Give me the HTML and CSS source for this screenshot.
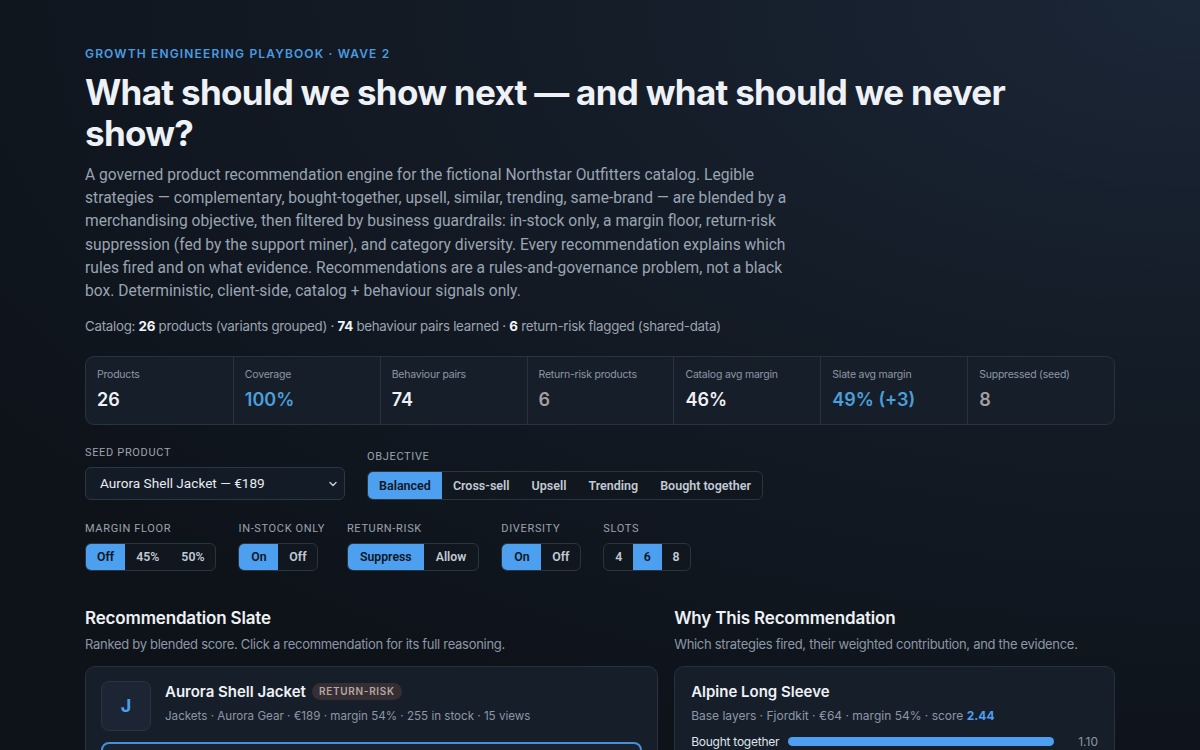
FILE: index.html
```html
<!DOCTYPE html>
<html lang="en">
<head>
<meta charset="utf-8">
<title>Recommendation Engine</title>
<link rel="stylesheet" href="styles.css">
</head>
<body>
<main class="page">
  <div class="eyebrow">GROWTH ENGINEERING PLAYBOOK · WAVE 2</div>
  <h1 class="title">What should we show next — and what should we never show?</h1>
  <p class="lede">A governed product recommendation engine for the fictional Northstar Outfitters catalog. Legible strategies — complementary, bought-together, upsell, similar, trending, same-brand — are blended by a merchandising objective, then filtered by business guardrails: in-stock only, a margin floor, return-risk suppression (fed by the support miner), and category diversity. Every recommendation explains which rules fired and on what evidence. Recommendations are a rules-and-governance problem, not a black box. Deterministic, client-side, catalog + behaviour signals only.</p>
  <p class="catalog">Catalog: <b>26</b> products (variants grouped) · <b>74</b> behaviour pairs learned · <b>6</b> return-risk flagged (shared-data)</p>

  <section class="stats">
    <div class="stat"><div class="stat-label">Products</div><div class="stat-value">26</div></div>
    <div class="stat"><div class="stat-label">Coverage</div><div class="stat-value blue">100%</div></div>
    <div class="stat"><div class="stat-label">Behaviour pairs</div><div class="stat-value">74</div></div>
    <div class="stat"><div class="stat-label">Return-risk products</div><div class="stat-value muted">6</div></div>
    <div class="stat"><div class="stat-label">Catalog avg margin</div><div class="stat-value">46%</div></div>
    <div class="stat"><div class="stat-label">Slate avg margin</div><div class="stat-value blue">49% (+3)</div></div>
    <div class="stat"><div class="stat-label">Suppressed (seed)</div><div class="stat-value muted">8</div></div>
  </section>

  <section class="controls">
    <div class="control">
      <div class="control-label">SEED PRODUCT</div>
      <div class="select">
        <span>Aurora Shell Jacket — €189</span>
        <svg class="chev" width="10" height="10" viewBox="0 0 10 10"><path d="M2 3.5 L5 6.5 L8 3.5" fill="none" stroke="#c9d0da" stroke-width="1.4" stroke-linecap="round" stroke-linejoin="round"/></svg>
      </div>
    </div>
    <div class="control">
      <div class="control-label">OBJECTIVE</div>
      <div class="seg seg-lg">
        <button class="active">Balanced</button><button>Cross-sell</button><button>Upsell</button><button>Trending</button><button>Bought together</button>
      </div>
    </div>
  </section>

  <section class="controls row2">
    <div class="control">
      <div class="control-label">MARGIN FLOOR</div>
      <div class="seg"><button class="active">Off</button><button>45%</button><button>50%</button></div>
    </div>
    <div class="control">
      <div class="control-label">IN-STOCK ONLY</div>
      <div class="seg"><button class="active w40">On</button><button class="w40">Off</button></div>
    </div>
    <div class="control">
      <div class="control-label">RETURN-RISK</div>
      <div class="seg seg-wide"><button class="active">Suppress</button><button>Allow</button></div>
    </div>
    <div class="control">
      <div class="control-label">DIVERSITY</div>
      <div class="seg"><button class="active w40">On</button><button class="w40">Off</button></div>
    </div>
    <div class="control">
      <div class="control-label">SLOTS</div>
      <div class="seg"><button class="slot">4</button><button class="slot active">6</button><button class="slot">8</button></div>
    </div>
  </section>

  <section class="columns">
    <div class="col">
      <h2 class="sec-title">Recommendation Slate</h2>
      <p class="sec-sub">Ranked by blended score. Click a recommendation for its full reasoning.</p>
      <div class="card slate">
        <div class="seed">
          <div class="avatar">J</div>
          <div class="seed-info">
            <div class="seed-name">Aurora Shell Jacket <span class="badge">RETURN-RISK</span></div>
            <div class="meta seed-meta">Jackets · Aurora Gear · €189 · margin 54% · 255 in stock · 15 views</div>
          </div>
        </div>
        <div class="rec selected"></div>
      </div>
    </div>
    <div class="col">
      <h2 class="sec-title">Why This Recommendation</h2>
      <p class="sec-sub">Which strategies fired, their weighted contribution, and the evidence.</p>
      <div class="card why">
        <div class="why-name">Alpine Long Sleeve</div>
        <div class="meta why-meta">Base layers · Fjordkit · €64 · margin 54% · score <b class="score">2.44</b></div>
        <div class="bar-row">
          <span class="bar-label">Bought together</span>
          <span class="bar-track"><span class="bar-fill" style="width:100%"></span></span>
          <span class="bar-val">1.10</span>
        </div>
      </div>
    </div>
  </section>
</main>
</body>
</html>
```

FILE: styles.css
```css
* { box-sizing: border-box; }
html, body { margin: 0; padding: 0; }
body {
  min-height: 100vh;
  background: radial-gradient(ellipse 120% 90% at 100% 0%, #1b2637 0%, #141c27 45%, #0e131a 100%);
  background-color: #0e131a;
  color: #e6eaf0;
  font-family: Inter, "Noto Sans", sans-serif;
  overflow: hidden;
}
.page {
  width: 1030px;
  margin: 0 auto;
  padding-top: 46px;
}
.eyebrow {
  font-size: 12px;
  font-weight: 600;
  letter-spacing: 1.15px;
  color: #4b9be0;
  line-height: 16px;
}
.title {
  margin: 10px 0 0;
  font-size: 35px;
  line-height: 41px;
  font-weight: 700;
  letter-spacing: -0.02em;
  color: #eef1f5;
  max-width: 1010px;
}
.lede {
  margin: 10px 0 0;
  max-width: 720px;
  font-family: Roboto, sans-serif;
  font-size: 15.6px;
  line-height: 23.2px;
  color: #9aa4b2;
}
.catalog {
  margin: 13.5px 0 0;
  font-size: 13.3px;
  letter-spacing: -0.02em;
  line-height: 18px;
  color: #9aa4b2;
}
.catalog b { color: #f2f4f7; font-weight: 700; }

.stats {
  margin-top: 21px;
  display: grid;
  grid-template-columns: repeat(7, 1fr);
  border: 1px solid #283241;
  border-radius: 9px;
  background: #161e29;
  overflow: hidden;
}
.stat {
  padding: 11px 11px 13px;
  border-left: 1px solid #283241;
}
.stat:first-child { border-left: none; }
.stat-label { font-size: 10.5px; letter-spacing: -0.02em; color: #8d97a5; line-height: 14px; }
.stat-value { margin-top: 7px; font-size: 18px; font-weight: 600; color: #eef1f5; line-height: 22px; }
.stat-value.blue { color: #4a9fdc; }
.stat-value.muted { color: #a59ea2; }

.controls {
  display: flex;
  align-items: flex-end;
  gap: 22px;
  margin-top: 21px;
}
.controls.row2 { margin-top: 22px; }
.control-label {
  font-family: Roboto, sans-serif;
  font-size: 11px;
  letter-spacing: 0.06em;
  color: #9aa3af;
  line-height: 14px;
  margin-bottom: 7px;
}
.select {
  width: 260px;
  height: 33px;
  border: 1px solid #2c3645;
  border-radius: 6px;
  background: #131b26;
  display: flex;
  align-items: center;
  justify-content: space-between;
  padding: 0 6px 0 14px;
  font-family: Roboto, sans-serif;
  font-size: 13.6px;
  color: #e8ebf0;
}
.chev { margin-top: 1px; }
.seg {
  display: inline-flex;
  height: 28px;
  border: 1px solid #2a3441;
  border-radius: 6px;
  background: #10171f;
  overflow: hidden;
}
.seg-lg { height: 29px; }
.seg button {
  border: none;
  background: transparent;
  color: #c3cad4;
  font-family: Roboto, sans-serif;
  font-weight: 600;
  font-size: 12.5px;
  padding: 0 11px;
  margin: 0;
  cursor: pointer;
}
.row2 .seg button { font-size: 12.3px; padding: 0 11px; }
.row2 .seg-wide button { padding: 0 12px; }
.seg button.active { background: #4d9ff0; color: #0d1620; }
.row2 .seg button.w40 { width: 39px; padding: 0; }
.row2 .seg button.slot { width: 28.7px; padding: 0; }

.columns {
  margin-top: 35px;
  display: grid;
  grid-template-columns: 1.3fr 1fr;
  gap: 16px;
}
.sec-title {
  margin: 0;
  font-size: 17px;
  font-weight: 600;
  letter-spacing: -0.01em;
  line-height: 24px;
  color: #eef1f5;
}
.sec-sub {
  margin: 5px 0 0;
  font-size: 13px;
  letter-spacing: -0.023em;
  line-height: 18px;
  color: #8d97a5;
}
.card {
  margin-top: 13px;
  border: 1px solid #263141;
  border-radius: 10px;
  background: #161e2a;
  height: 200px;
}
.slate { padding: 14px 15px 0; }
.seed { display: flex; gap: 14px; align-items: flex-start; }
.avatar {
  flex: 0 0 50px;
  width: 50px; height: 50px;
  border-radius: 8px;
  border: 1px solid #293443;
  background: #1b2533;
  display: flex; align-items: center; justify-content: center;
  color: #4a9fe8;
  font-size: 18px;
  font-weight: 700;
}
.seed-name {
  font-size: 15px;
  font-weight: 600;
  color: #eef1f5;
  line-height: 22px;
  display: flex; align-items: center; gap: 6px;
}
.badge {
  font-size: 10px;
  font-weight: 600;
  letter-spacing: 0.07em;
  color: #b3a7a8;
  background: #372e31;
  border-radius: 9px;
  padding: 2px 7px;
  line-height: 13px;
}
.meta {
  font-size: 12px;
  line-height: 16px;
  color: #8c97a5;
}
.seed-meta { margin-top: 5px; font-size: 11.6px; }
.rec.selected {
  margin-top: 11px;
  height: 60px;
  border: 2px solid #4a8fd6;
  border-radius: 8px;
  background: #182231;
}
.why { padding: 15px 16px 0; }
.why-name { font-size: 15px; font-weight: 600; color: #eef1f5; line-height: 20px; }
.why-meta { margin-top: 6px; }
.score { color: #4d9ff0; font-weight: 700; }
.bar-row {
  margin-top: 10px;
  display: flex;
  align-items: center;
  font-size: 12px;
  letter-spacing: -0.02em;
  line-height: 16px;
}
.bar-label { flex: 0 0 97px; white-space: nowrap; color: #dfe4ea; }
.bar-track { flex: 0 0 266px; height: 9px; border-radius: 5px; background: #223047; }
.bar-fill { display: block; height: 100%; border-radius: 5px; background: #4d9ff0; }
.bar-val { margin-left: auto; color: #8c97a5; text-align: right; letter-spacing: 0; }
```
